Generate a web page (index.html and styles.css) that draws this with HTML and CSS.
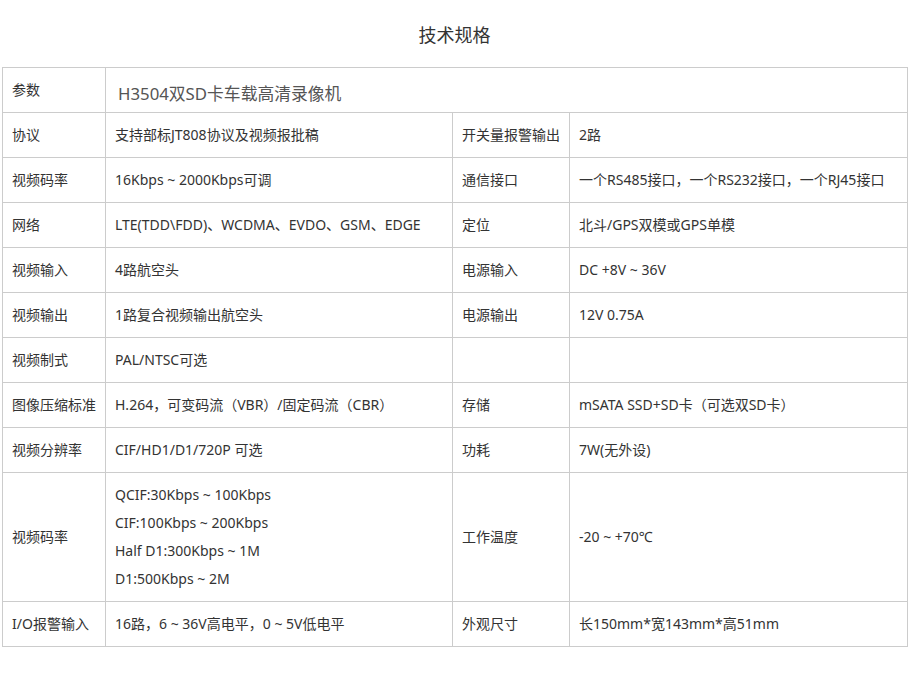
FILE: index.html
```html
<!DOCTYPE html>
<html lang="zh-CN">
<head>
<meta charset="utf-8">
<title>技术规格</title>
<link rel="stylesheet" href="styles.css">
</head>
<body>
<div class="page">
  <h2 class="title">技术规格</h2>
  <table class="spec">
    <colgroup>
      <col class="c1"><col class="c2"><col class="c3"><col class="c4">
    </colgroup>
    <tr>
      <td>参数</td>
      <td colspan="3" class="model"><span>H3504双SD卡车载高清录像机</span></td>
    </tr>
    <tr><td>协议</td><td>支持部标JT808协议及视频报批稿</td><td>开关量报警输出</td><td>2路</td></tr>
    <tr><td>视频码率</td><td>16Kbps ~ 2000Kbps可调</td><td>通信接口</td><td>一个RS485接口，一个RS232接口，一个RJ45接口</td></tr>
    <tr><td>网络</td><td>LTE(TDD\FDD)、WCDMA、EVDO、GSM、EDGE</td><td>定位</td><td>北斗/GPS双模或GPS单模</td></tr>
    <tr><td>视频输入</td><td>4路航空头</td><td>电源输入</td><td>DC +8V ~ 36V</td></tr>
    <tr><td>视频输出</td><td>1路复合视频输出航空头</td><td>电源输出</td><td>12V 0.75A</td></tr>
    <tr><td>视频制式</td><td>PAL/NTSC可选</td><td></td><td></td></tr>
    <tr><td>图像压缩标准</td><td>H.264，可变码流（VBR）/固定码流（CBR）</td><td>存储</td><td>mSATA SSD+SD卡（可选双SD卡）</td></tr>
    <tr><td>视频分辨率</td><td>CIF/HD1/D1/720P 可选</td><td>功耗</td><td>7W(无外设)</td></tr>
    <tr>
      <td>视频码率</td>
      <td class="multi">
        <p>QCIF:30Kbps ~ 100Kbps</p>
        <p>CIF:100Kbps ~ 200Kbps</p>
        <p>Half D1:300Kbps ~ 1M</p>
        <p>D1:500Kbps ~ 2M</p>
      </td>
      <td>工作温度</td><td>-20 ~ +70℃</td>
    </tr>
    <tr><td>I/O报警输入</td><td>16路，6 ~ 36V高电平，0 ~ 5V低电平</td><td>外观尺寸</td><td>长150mm*宽143mm*高51mm</td></tr>
  </table>
</div>
</body>
</html>
```

FILE: styles.css
```css
html, body {
  margin: 0;
  padding: 0;
  background: #fff;
}
body {
  font-family: "Noto Sans", "Noto Sans CJK SC", sans-serif;
  color: #333;
  font-size: 14px;
}
.page {
  padding: 0 2px;
}
.title {
  margin: 0;
  padding: 21px 0 0;
  height: 67px;
  box-sizing: border-box;
  text-align: center;
  font-family: "Noto Sans CJK SC", sans-serif;
  font-size: 18px;
  font-weight: normal;
  line-height: 26px;
  color: #333;
}
.spec {
  border-collapse: collapse;
  table-layout: fixed;
  width: 905px;
}
.c1 { width: 103px; }
.c2 { width: 347px; }
.c3 { width: 117px; }
.c4 { width: 338px; }
.spec td {
  border: 1px solid #ccc;
  padding: 8px 9px;
  line-height: 28px;
  height: 28px;
  vertical-align: middle;
  white-space: nowrap;
  overflow: hidden;
}
.spec td.model {
  padding: 12px 12px 4px;
  font-size: 16.8px;
  color: #555;
}
.spec td.multi p {
  margin: 0;
  line-height: 28px;
}
```
